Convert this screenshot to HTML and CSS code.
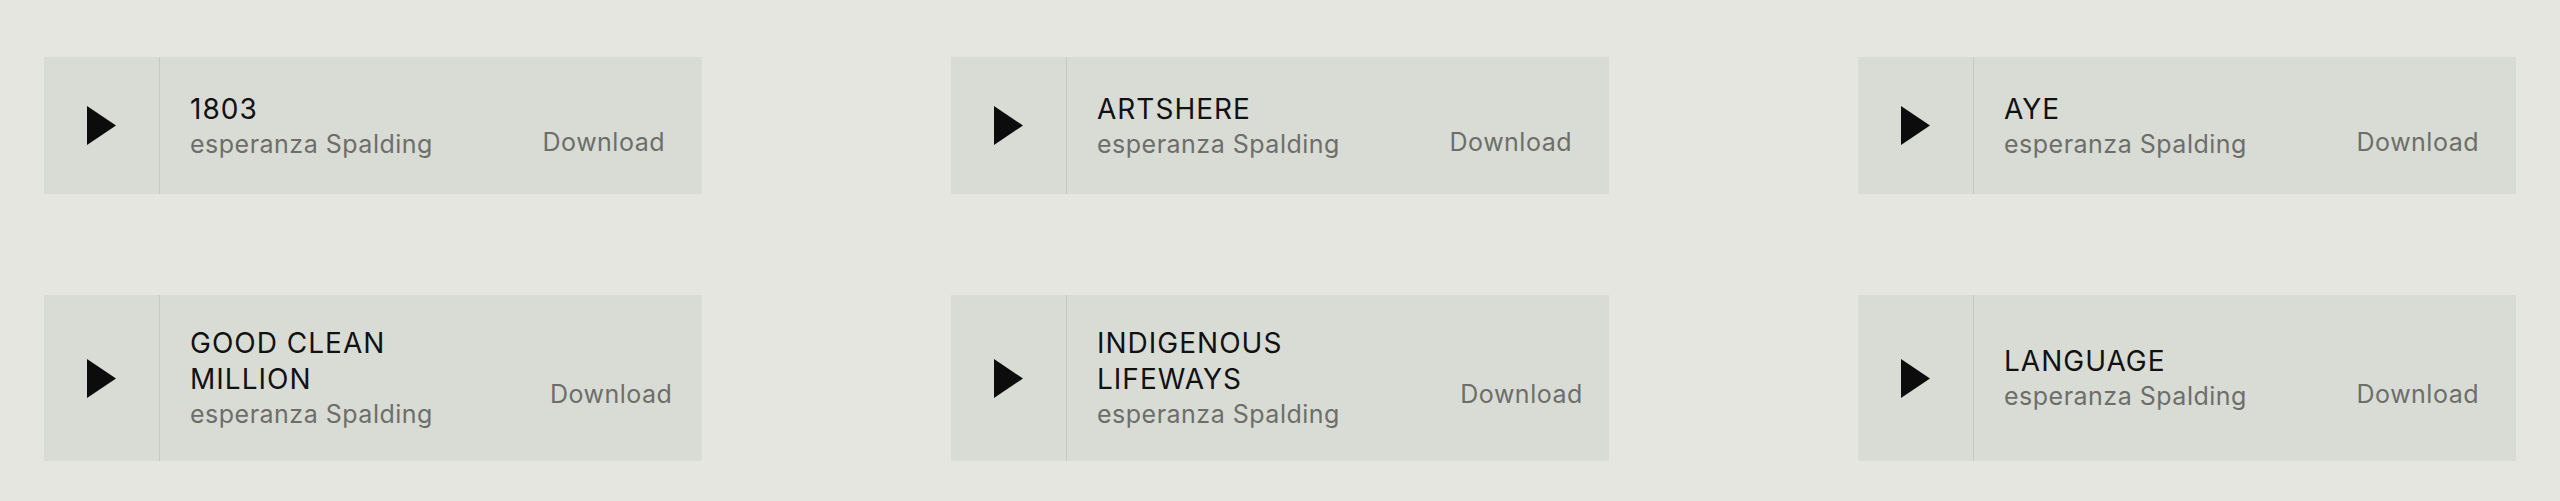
FILE: index.html
```html
<!DOCTYPE html>
<html lang="en">
  <head>
    <meta charset="UTF-8" />
    <meta name="viewport" content="width=device-width, initial-scale=1.0" />
    <title>Tracks</title>

    <link rel="stylesheet" href="styles.css">
  </head>
  <body>
    <div class="tracks">
      <div class="track">
        <div class="play"><svg width="29" height="39" viewBox="0 0 29 39"><path d="M0 0 L29 19.5 L0 39 Z" /></svg></div>
        <div class="info">
          <div class="title">1803</div>
          <div class="artist">esperanza Spalding</div>
        </div>
        <div class="download">Download</div>
      </div>
      <div class="track">
        <div class="play"><svg width="29" height="39" viewBox="0 0 29 39"><path d="M0 0 L29 19.5 L0 39 Z" /></svg></div>
        <div class="info">
          <div class="title">ARTSHERE</div>
          <div class="artist">esperanza Spalding</div>
        </div>
        <div class="download">Download</div>
      </div>
      <div class="track">
        <div class="play"><svg width="29" height="39" viewBox="0 0 29 39"><path d="M0 0 L29 19.5 L0 39 Z" /></svg></div>
        <div class="info">
          <div class="title">AYE</div>
          <div class="artist">esperanza Spalding</div>
        </div>
        <div class="download">Download</div>
      </div>
      <div class="track">
        <div class="play"><svg width="29" height="39" viewBox="0 0 29 39"><path d="M0 0 L29 19.5 L0 39 Z" /></svg></div>
        <div class="info">
          <div class="title">GOOD CLEAN MILLION</div>
          <div class="artist">esperanza Spalding</div>
        </div>
        <div class="download">Download</div>
      </div>
      <div class="track">
        <div class="play"><svg width="29" height="39" viewBox="0 0 29 39"><path d="M0 0 L29 19.5 L0 39 Z" /></svg></div>
        <div class="info">
          <div class="title">INDIGENOUS LIFEWAYS</div>
          <div class="artist">esperanza Spalding</div>
        </div>
        <div class="download">Download</div>
      </div>
      <div class="track">
        <div class="play"><svg width="29" height="39" viewBox="0 0 29 39"><path d="M0 0 L29 19.5 L0 39 Z" /></svg></div>
        <div class="info">
          <div class="title">LANGUAGE</div>
          <div class="artist">esperanza Spalding</div>
        </div>
        <div class="download">Download</div>
      </div>
    </div>
  </body>
</html>
```

FILE: styles.css
```css
body {
  margin: 0;
  background: #e5e6e0;
  font-family: Inter, "Noto Sans", sans-serif;
}

.tracks {
  display: grid;
  grid-template-columns: repeat(3, 658px);
  justify-content: space-between;
  row-gap: 101px;
  padding: 57px 44px 40px;
}

.track {
  display: flex;
  align-items: center;
  min-height: 137px;
  background: #d9dcd5;
}

.play {
  flex: none;
  align-self: stretch;
  width: 115px;
  border-right: 1px solid #c6c9c2;
  display: flex;
  justify-content: center;
  align-items: center;
}

.play svg {
  fill: #0c0c0c;
}

.info {
  flex: 1 1 auto;
  padding: 30px 0 30px 30px;
}

.title {
  font-size: 28px;
  line-height: 36px;
  letter-spacing: 1px;
  color: #111;
}

.artist {
  font-size: 25px;
  line-height: 34px;
  letter-spacing: 0.5px;
  color: #6d6e6a;
}

.download {
  flex: 0 1 auto;
  min-width: 0;
  margin-top: 32px;
  padding: 0 37px 0 54px;
  font-size: 25px;
  line-height: 34px;
  letter-spacing: 0.5px;
  color: #6d6e6a;
  cursor: pointer;
}
```
